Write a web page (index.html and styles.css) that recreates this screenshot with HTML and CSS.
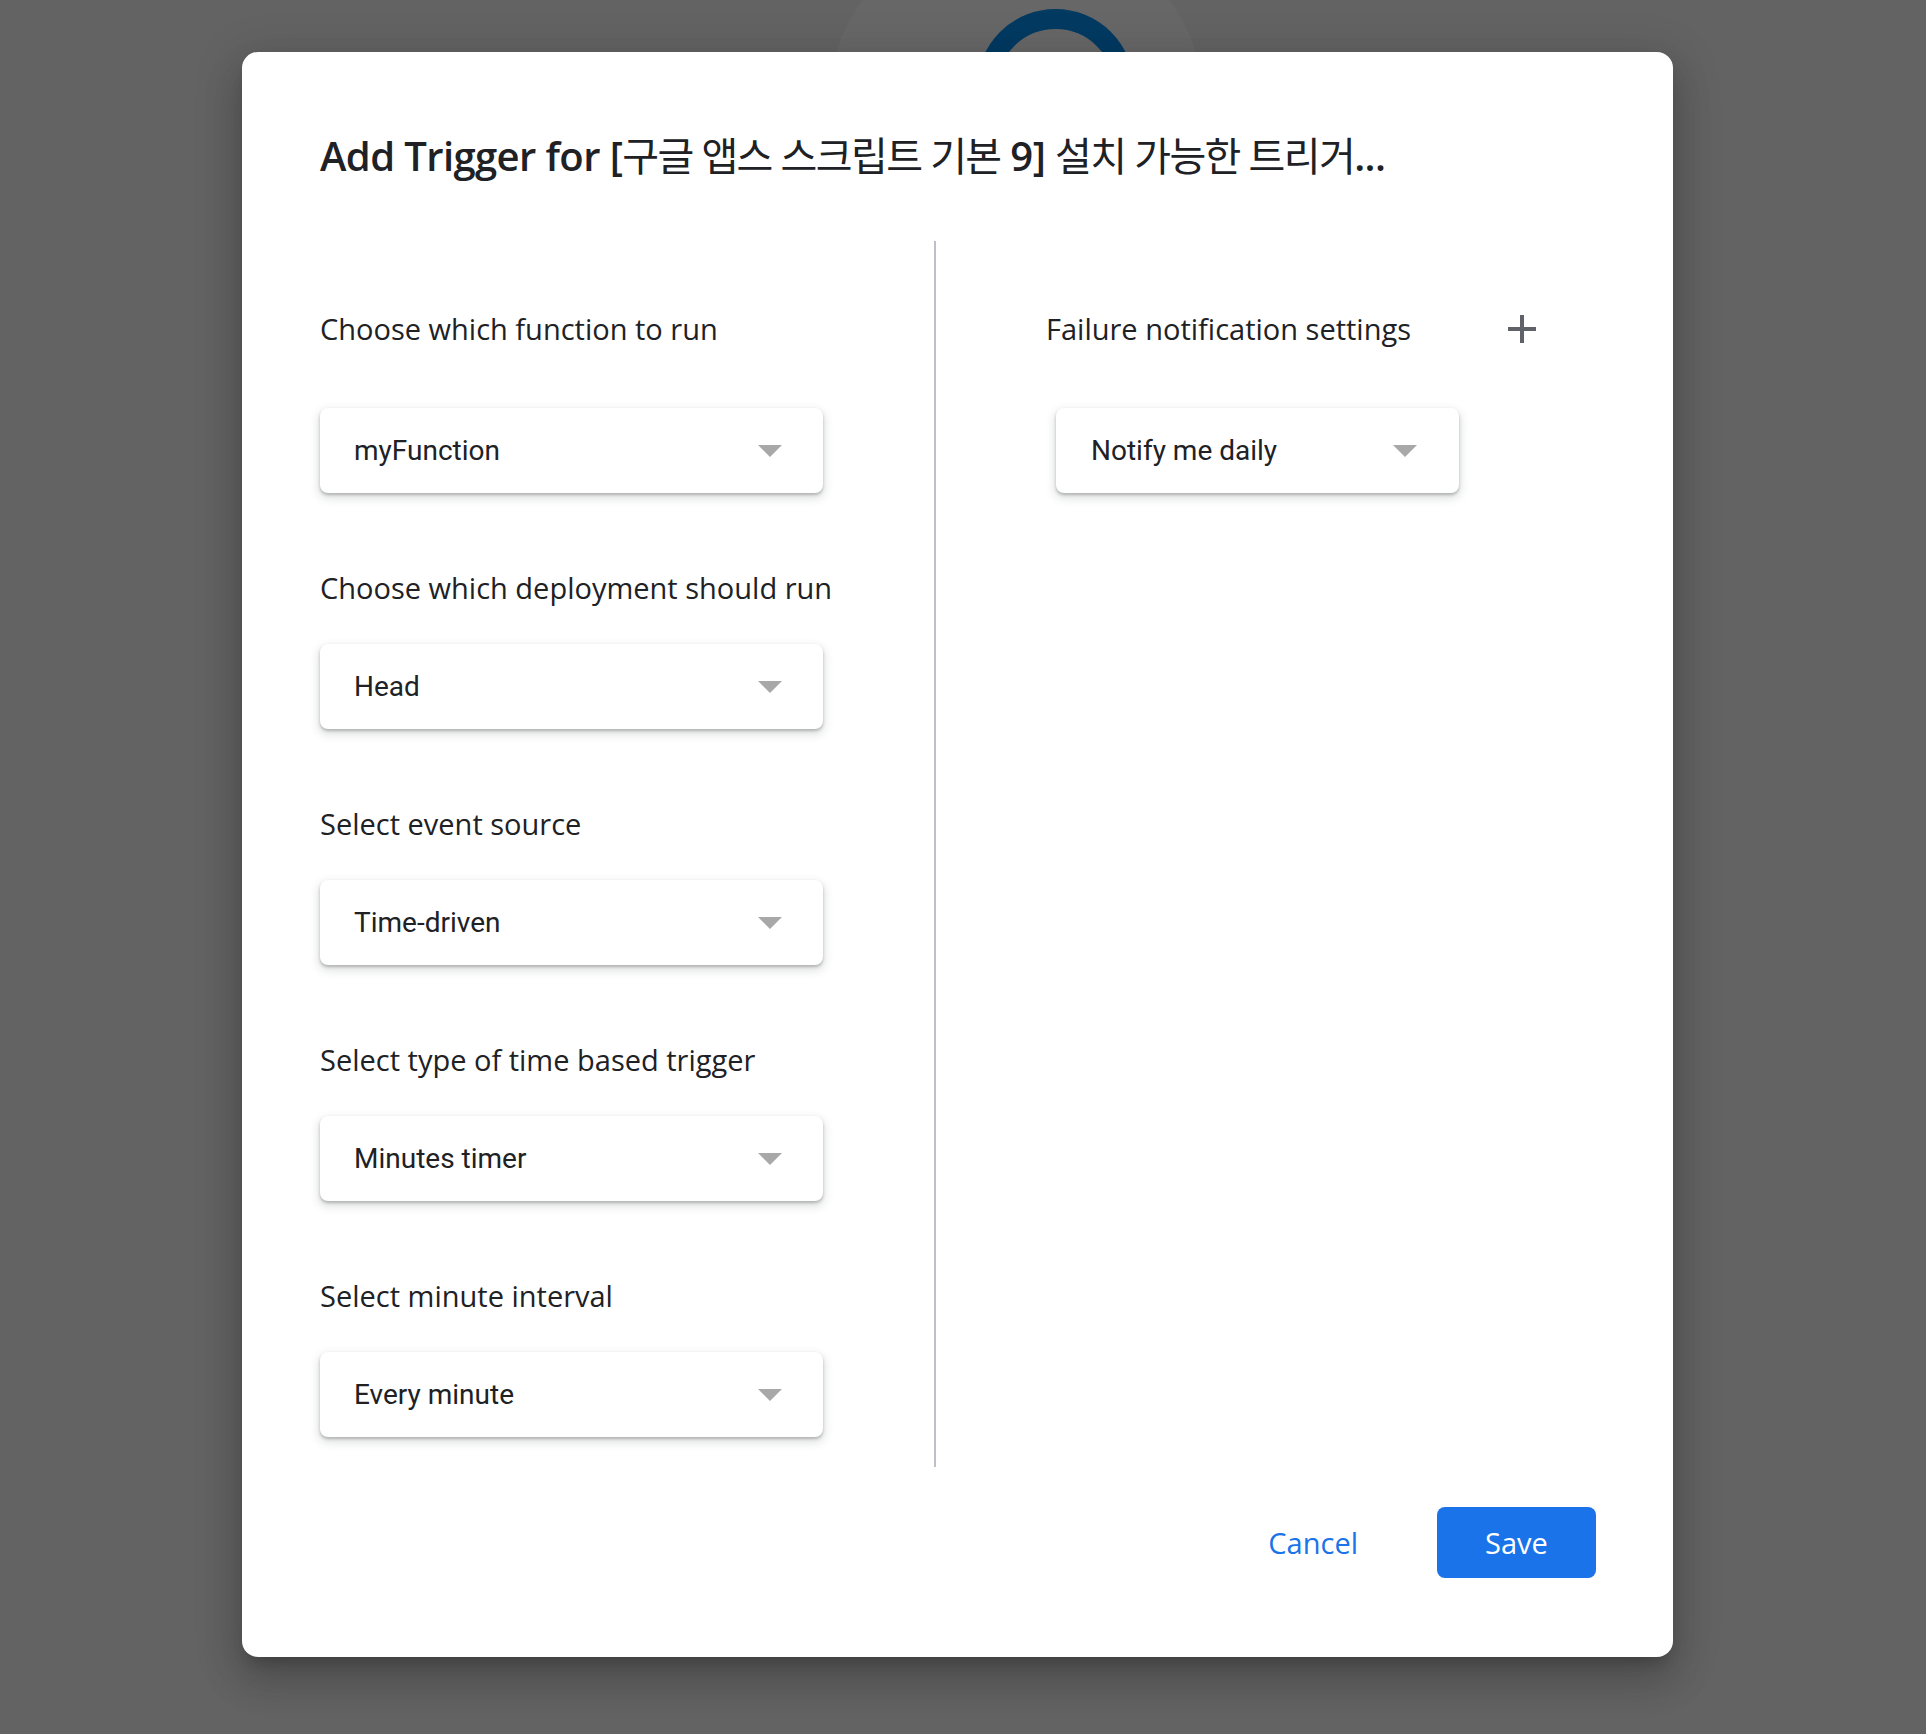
FILE: index.html
```html
<!DOCTYPE html>
<html lang="en">
<head>
<meta charset="utf-8">
<title>Add Trigger</title>
<link rel="stylesheet" href="styles.css">
</head>
<body>
<div class="backdrop-circle"></div>
<div class="backdrop-ring"></div>
<div class="dialog">
  <h1 class="dialog-title">Add Trigger for [<span class="title-ko">구글 앱스 스크립트 기본</span> 9] <span class="title-ko">설치 가능한 트리거</span>...</h1>
  <div class="dialog-body">
    <div class="col col-left">
      <div class="field field-first">
        <div class="field-head"><span class="field-label">Choose which function to run</span></div>
        <div class="select"><span class="select-value">myFunction</span><span class="select-arrow"></span></div>
      </div>
      <div class="field">
        <div class="field-label">Choose which deployment should run</div>
        <div class="select"><span class="select-value">Head</span><span class="select-arrow"></span></div>
      </div>
      <div class="field">
        <div class="field-label">Select event source</div>
        <div class="select"><span class="select-value">Time-driven</span><span class="select-arrow"></span></div>
      </div>
      <div class="field">
        <div class="field-label">Select type of time based trigger</div>
        <div class="select"><span class="select-value">Minutes timer</span><span class="select-arrow"></span></div>
      </div>
      <div class="field">
        <div class="field-label">Select minute interval</div>
        <div class="select"><span class="select-value">Every minute</span><span class="select-arrow"></span></div>
      </div>
    </div>
    <div class="col col-right">
      <div class="field field-first">
        <div class="field-head head-wide">
          <span class="field-label">Failure notification settings</span>
          <span class="plus-btn"><svg width="28" height="28" viewBox="0 0 28 28"><path d="M14 0V28M0 14H28" stroke="#5f6368" stroke-width="4" fill="none"/></svg></span>
        </div>
        <div class="select select-narrow"><span class="select-value">Notify me daily</span><span class="select-arrow"></span></div>
      </div>
    </div>
  </div>
  <div class="dialog-footer">
    <button class="btn btn-text">Cancel</button>
    <button class="btn btn-primary">Save</button>
  </div>
</div>
</body>
</html>
```
FILE: styles.css
```css
html, body {
  margin: 0;
  padding: 0;
}
body {
  width: 1926px;
  height: 1734px;
  background: #636363;
  overflow: hidden;
  position: relative;
  font-family: "Open Sans", "Noto Sans", sans-serif;
}
.backdrop-circle {
  position: absolute;
  left: 827px;
  top: -79px;
  width: 378px;
  height: 378px;
  border-radius: 50%;
  background: #676767;
}
.backdrop-ring {
  position: absolute;
  left: 977px;
  top: 9px;
  width: 117px;
  height: 117px;
  border-radius: 50%;
  border: 20px solid #023a62;
}
.dialog {
  position: relative;
  z-index: 1;
  margin: 52px 0 0 242px;
  width: 1431px;
  height: 1605px;
  box-sizing: border-box;
  padding: 80px 77px 0 78px;
  background: #fff;
  border-radius: 16px;
  box-shadow: 0 24px 38px 3px rgba(0,0,0,.14), 0 9px 46px 8px rgba(0,0,0,.12), 0 11px 15px -7px rgba(0,0,0,.2);
  display: flex;
  flex-direction: column;
}
.dialog-title {
  margin: 0;
  font-family: "Open Sans", "Noto Sans CJK KR", sans-serif;
  font-size: 40px;
  line-height: 48px;
  font-weight: 600;
  color: #202124;
  letter-spacing: -0.6px;
  white-space: nowrap;
}
.title-ko {
  font-weight: 400;
  letter-spacing: -1.6px;
}
.dialog-body {
  margin-top: 61px;
  height: 1226px;
  display: flex;
}
.col {
  box-sizing: border-box;
  padding-top: 56px;
}
.col-left {
  width: 616px;
  border-right: 2px solid #bdc1c6;
}
.col-right {
  padding-left: 110px;
}
.field {
  margin-top: 75px;
}
.field.field-first {
  margin-top: 0;
}
.field-head {
  height: 64px;
  display: flex;
  align-items: center;
}
.head-wide {
  width: 500px;
  justify-content: space-between;
}
.field-label {
  font-size: 29px;
  line-height: 40px;
  color: #202124;
}
.plus-btn {
  width: 48px;
  height: 48px;
  display: flex;
  align-items: center;
  justify-content: center;
}
.select {
  margin-top: 36px;
  width: 503px;
  height: 85px;
  box-sizing: border-box;
  padding: 0 41px 0 34px;
  background: #fff;
  border-radius: 8px;
  box-shadow: 0 2px 3px rgba(60,64,67,.3), 0 4px 9px 2px rgba(60,64,67,.15);
  display: flex;
  align-items: center;
  justify-content: space-between;
}
.field-first .select {
  margin-top: 47px;
}
.select-narrow {
  width: 403px;
  margin-left: 10px;
  padding-left: 35px;
  padding-right: 42px;
}
.select-value {
  font-family: Roboto, "Noto Sans", sans-serif;
  font-size: 28px;
  color: #202124;
}
.select-arrow {
  width: 0;
  height: 0;
  border-left: 12px solid transparent;
  border-right: 12px solid transparent;
  border-top: 12px solid #a8a8a8;
}
.dialog-footer {
  margin-top: 40px;
  display: flex;
  justify-content: flex-end;
  gap: 31px;
}
.btn {
  height: 71px;
  padding: 0 48px;
  border: none;
  border-radius: 8px;
  font-family: "Open Sans", sans-serif;
  font-size: 29px;
  font-weight: 500;
  cursor: pointer;
}
.btn-text {
  background: transparent;
  color: #1a73e8;
}
.btn-primary {
  background: #1a73e8;
  color: #fff;
  width: 159px;
  padding: 0;
}
```
